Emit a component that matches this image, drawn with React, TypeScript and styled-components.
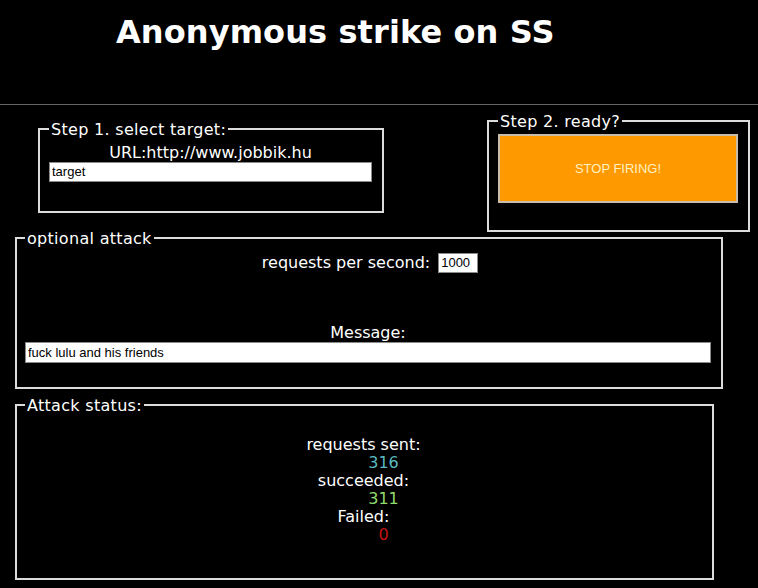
import React from 'react';
import styled, { createGlobalStyle } from 'styled-components';

const GlobalStyle = createGlobalStyle`
  html, body {
    margin: 0;
    padding: 0;
    background: #000;
  }
  body {
    color: #fff;
    font-family: "DejaVu Sans", Verdana, sans-serif;
    font-size: 16px;
  }
`;

const Page = styled.div`
  width: 758px;
  min-height: 588px;
  background: #000;
`;

const Header = styled.header`
  height: 104px;
  border-bottom: 1px solid #666;
`;

const Title = styled.h1`
  margin: 0;
  padding: 13px 0 0 116px;
  font-family: "DejaVu Sans", Verdana, sans-serif;
  font-size: 32px;
  line-height: 38px;
  font-weight: bold;
  letter-spacing: 0.1px;
  color: #fff;
`;

const TopRow = styled.div`
  display: flex;
  align-items: flex-start;
`;

const Box = styled.fieldset<{ $width: number; $left: number; $top: number; $pad: string }>`
  box-sizing: border-box;
  width: ${p => p.$width}px;
  min-width: 0;
  margin: ${p => p.$top}px 0 0 ${p => p.$left}px;
  padding: ${p => p.$pad};
  border: 2px solid #dcdcdc;
`;

const Legend = styled.legend`
  padding: 0 2px;
  font-size: 16px;
  line-height: 19px;
  letter-spacing: 0.3px;
  color: #fff;
`;

const Caption = styled.div`
  text-align: center;
  line-height: 19px;
`;

const TextInput = styled.input<{ $h: number }>`
  display: block;
  box-sizing: border-box;
  width: 100%;
  height: ${p => p.$h}px;
  margin: 0;
  padding: 0 2px;
  border: 1px solid #8a8a8a;
  background: #fff;
  color: #000;
  font-family: "Liberation Sans", Arial, sans-serif;
  font-size: 13px;
  outline: none;
`;

const RateRow = styled.div`
  display: flex;
  justify-content: center;
  align-items: center;
  gap: 8px;
  line-height: 19px;
  margin-left: 4px;
`;

const RateInput = styled(TextInput)`
  width: 40px;
`;

const Spacer = styled.div<{ $h: number }>`
  height: ${p => p.$h}px;
`;

const FireButton = styled.button`
  display: block;
  box-sizing: border-box;
  width: 100%;
  height: 69px;
  margin: 0;
  padding: 0;
  border: 2px solid #c9bda9;
  background: #ff9900;
  color: #fff1c2;
  font-family: "Liberation Sans", Arial, sans-serif;
  font-size: 13px;
  cursor: pointer;
`;

const StatLabel = styled.div`
  text-align: center;
  line-height: 18px;
`;

const StatCount = styled.div<{ $color: string }>`
  text-align: center;
  padding-left: 40px;
  line-height: 18px;
  color: ${p => p.$color};
`;

const stats = [
  { label: 'requests sent:', value: 316, color: '#5ab9c0' },
  { label: 'succeeded:', value: 311, color: '#8fdc6a' },
  { label: 'Failed:', value: 0, color: '#c41414' },
];

export default function App() {
  return (
    <Page>
      <GlobalStyle />
      <Header>
        <Title>Anonymous strike on SS</Title>
      </Header>

      <TopRow>
        <Box $width={346} $left={38} $top={14.5} $pad="4px 10px 29px 9px">
          <Legend>Step 1. select target:</Legend>
          <Caption>URL:http://www.jobbik.hu</Caption>
          <TextInput $h={20} defaultValue="target" />
        </Box>

        <Box $width={263} $left={103} $top={6.5} $pad="3.5px 10px 27px 9px">
          <Legend>Step 2. ready?</Legend>
          <FireButton>STOP FIRING!</FireButton>
        </Box>
      </TopRow>

      <Box $width={708} $left={15} $top={-3.5} $pad="5px 10px 24px 8px">
        <Legend>optional attack</Legend>
        <RateRow>
          <span>requests per second:</span>
          <RateInput $h={20} defaultValue="1000" />
        </RateRow>
        <Spacer $h={50.5} />
        <Caption>Message:</Caption>
        <TextInput $h={21} defaultValue="fuck lulu and his friends" />
      </Box>

      <Box $width={699} $left={15} $top={6.5} $pad="21px 10px 34.5px 8px">
        <Legend>Attack status:</Legend>
        {stats.map(s => (
          <React.Fragment key={s.label}>
            <StatLabel>{s.label}</StatLabel>
            <StatCount $color={s.color}>{s.value}</StatCount>
          </React.Fragment>
        ))}
      </Box>
    </Page>
  );
}
